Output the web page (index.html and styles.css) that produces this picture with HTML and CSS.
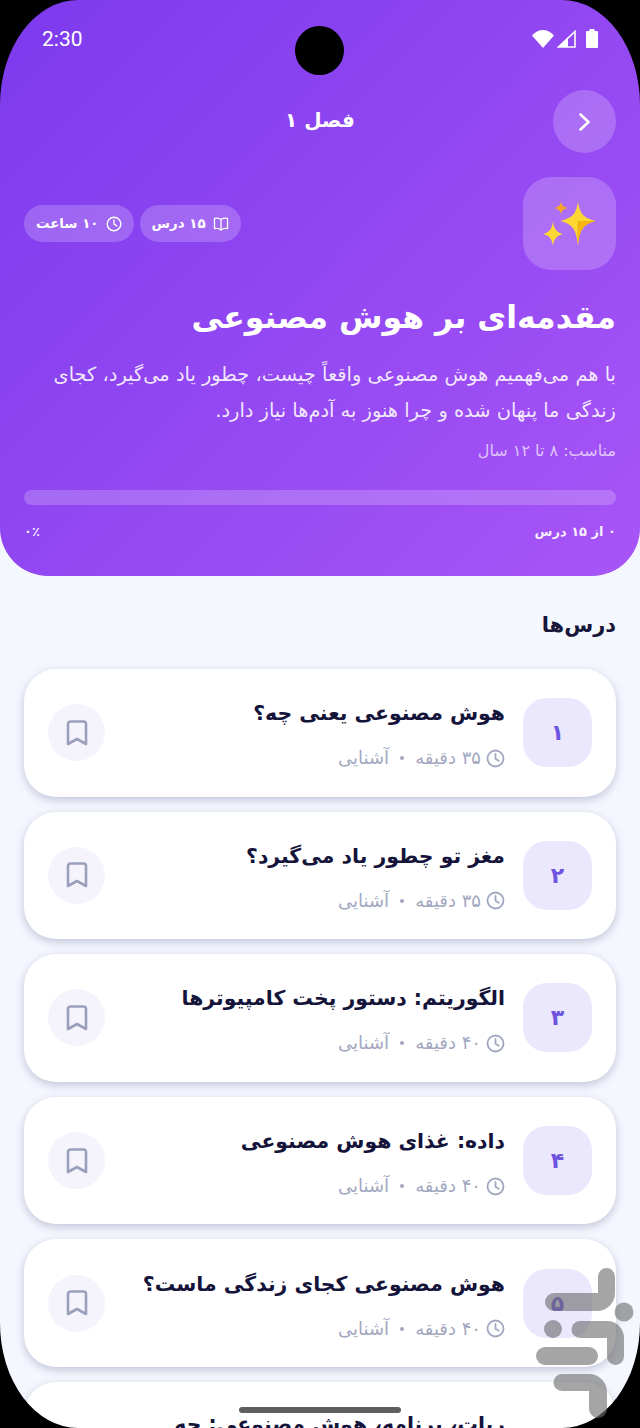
FILE: index.html
```html
<!DOCTYPE html>
<html lang="fa" dir="rtl">
<head>
<meta charset="utf-8">
<title>فصل ۱</title>
<link rel="stylesheet" href="styles.css">
</head>
<body>
<div class="screen">
  <header class="hero">
    <div class="status" dir="ltr">
      <span class="time">2:30</span>
      <div class="status-icons">
        <svg width="22" height="18" viewBox="0 0 22 18"><path d="M0 5.500C3 2 7 0 11 0s8 2 11 5.500L11 18z" fill="#fff"/></svg>
        <svg width="19" height="18" viewBox="0 0 19 18"><path d="M18 1.500V17H1.500z" fill="none" stroke="#fff" stroke-width="1.600"/><path d="M11 8.500V17H1.500z" fill="#fff"/></svg>
        <svg class="batt" width="12" height="19" viewBox="0 0 12 19"><path d="M3.500 0h5v2H11a1 1 0 0 1 1 1v15a1 1 0 0 1-1 1H1a1 1 0 0 1-1-1V3a1 1 0 0 1 1-1h2.500z" fill="#fff"/></svg>
      </div>
    </div>
    <div class="topbar">
      <button class="back" aria-label="بازگشت">
        <svg width="16" height="22" viewBox="0 0 16 22"><path d="M3.500 3.500L11.500 11l-8 7.500" fill="none" stroke="#fff" stroke-width="2.600" stroke-linecap="round" stroke-linejoin="round"/></svg>
      </button>
      <h2 class="chapter">فصل ۱</h2>
    </div>
    <div class="intro">
      <div class="tile">
        <svg width="60" height="50" viewBox="0 0 60 50">
          <path d="M38 2c1.500 12 5 17 18 20-13 3-16.500 9-18 25-1.500-16-5-22-18-25 13-3 16.500-8 18-20z" fill="#fdd835"/>
          <path d="M38 47c-.5-12-1-20 0-25l18 0c-13 3-16.500 9-18 25z" fill="#f6b40e"/>
          <path d="M13 22c1 8 3 11 10 13-7 2-9 5-10 12-1-7-3-10-10-12 7-2 9-5 10-13z" fill="#fdd835"/>
          <path d="M21 2c.5 4 2 6 7 7-5 1-6.500 3-7 7-.5-4-2-6-7-7 5-1 6.500-3 7-7z" fill="#f5a623"/>
        </svg>
      </div>
      <div class="chips">
        <span class="chip">
          <svg width="16" height="16" viewBox="0 0 16 16"><path d="M8 3.500C6.500 2.500 4 2 1.500 2.300v10.200C4 12.200 6.500 12.700 8 14c1.500-1.300 4-1.800 6.500-1.500V2.300C12 2 9.500 2.500 8 3.500zM8 3.500V14" fill="none" stroke="#fff" stroke-width="1.300" stroke-linejoin="round"/></svg>
          ۱۵ درس
        </span>
        <span class="chip">
          <svg width="16" height="16" viewBox="0 0 16 16"><circle cx="8" cy="8" r="6.800" fill="none" stroke="#fff" stroke-width="1.400"/><path d="M8 4v4.200l2.700 1.600" fill="none" stroke="#fff" stroke-width="1.400" stroke-linecap="round"/></svg>
          ۱۰ ساعت
        </span>
      </div>
    </div>
    <h1 class="headline">مقدمه‌ای بر هوش مصنوعی</h1>
    <p class="lead">با هم می‌فهمیم هوش مصنوعی واقعاً چیست، چطور یاد می‌گیرد، کجای زندگی ما پنهان شده و چرا هنوز به آدم‌ها نیاز دارد.</p>
    <p class="age">مناسب: ۸ تا ۱۲ سال</p>
    <div class="track"></div>
    <div class="progress-row">
      <span>۰ از ۱۵ درس</span>
      <span>۰٪</span>
    </div>
  </header>

  <main class="content">
    <h3 class="section">درس‌ها</h3>
    <div class="list">
      <article class="card">
        <div class="num">۱</div>
        <div class="body">
          <h4 class="lesson">هوش مصنوعی یعنی چه؟</h4>
          <div class="meta">
            <svg class="clock" width="19" height="19" viewBox="0 0 19 19"><circle cx="9.500" cy="9.500" r="8" fill="none" stroke="#a2a7c0" stroke-width="1.800"/><path d="M9.500 5v4.800l3.200 1.900" fill="none" stroke="#a2a7c0" stroke-width="1.800" stroke-linecap="round"/></svg>
            <span>۳۵ دقیقه</span><i class="dot"></i><span>آشنایی</span>
          </div>
        </div>
        <div class="mark"><svg width="22" height="26" viewBox="0 0 22 26"><path d="M2 4a2.500 2.500 0 0 1 2.500-2.500h13A2.500 2.500 0 0 1 20 4v20l-9-5-9 5z" fill="none" stroke="#9a9fbc" stroke-width="2.600" stroke-linejoin="round"/></svg></div>
      </article>
      <article class="card">
        <div class="num">۲</div>
        <div class="body">
          <h4 class="lesson">مغز تو چطور یاد می‌گیرد؟</h4>
          <div class="meta">
            <svg class="clock" width="19" height="19" viewBox="0 0 19 19"><circle cx="9.500" cy="9.500" r="8" fill="none" stroke="#a2a7c0" stroke-width="1.800"/><path d="M9.500 5v4.800l3.200 1.900" fill="none" stroke="#a2a7c0" stroke-width="1.800" stroke-linecap="round"/></svg>
            <span>۳۵ دقیقه</span><i class="dot"></i><span>آشنایی</span>
          </div>
        </div>
        <div class="mark"><svg width="22" height="26" viewBox="0 0 22 26"><path d="M2 4a2.500 2.500 0 0 1 2.500-2.500h13A2.500 2.500 0 0 1 20 4v20l-9-5-9 5z" fill="none" stroke="#9a9fbc" stroke-width="2.600" stroke-linejoin="round"/></svg></div>
      </article>
      <article class="card">
        <div class="num">۳</div>
        <div class="body">
          <h4 class="lesson">الگوریتم: دستور پخت کامپیوترها</h4>
          <div class="meta">
            <svg class="clock" width="19" height="19" viewBox="0 0 19 19"><circle cx="9.500" cy="9.500" r="8" fill="none" stroke="#a2a7c0" stroke-width="1.800"/><path d="M9.500 5v4.800l3.200 1.900" fill="none" stroke="#a2a7c0" stroke-width="1.800" stroke-linecap="round"/></svg>
            <span>۴۰ دقیقه</span><i class="dot"></i><span>آشنایی</span>
          </div>
        </div>
        <div class="mark"><svg width="22" height="26" viewBox="0 0 22 26"><path d="M2 4a2.500 2.500 0 0 1 2.500-2.500h13A2.500 2.500 0 0 1 20 4v20l-9-5-9 5z" fill="none" stroke="#9a9fbc" stroke-width="2.600" stroke-linejoin="round"/></svg></div>
      </article>
      <article class="card">
        <div class="num">۴</div>
        <div class="body">
          <h4 class="lesson">داده: غذای هوش مصنوعی</h4>
          <div class="meta">
            <svg class="clock" width="19" height="19" viewBox="0 0 19 19"><circle cx="9.500" cy="9.500" r="8" fill="none" stroke="#a2a7c0" stroke-width="1.800"/><path d="M9.500 5v4.800l3.200 1.900" fill="none" stroke="#a2a7c0" stroke-width="1.800" stroke-linecap="round"/></svg>
            <span>۴۰ دقیقه</span><i class="dot"></i><span>آشنایی</span>
          </div>
        </div>
        <div class="mark"><svg width="22" height="26" viewBox="0 0 22 26"><path d="M2 4a2.500 2.500 0 0 1 2.500-2.500h13A2.500 2.500 0 0 1 20 4v20l-9-5-9 5z" fill="none" stroke="#9a9fbc" stroke-width="2.600" stroke-linejoin="round"/></svg></div>
      </article>
      <article class="card">
        <div class="num">۵</div>
        <div class="body">
          <h4 class="lesson">هوش مصنوعی کجای زندگی ماست؟</h4>
          <div class="meta">
            <svg class="clock" width="19" height="19" viewBox="0 0 19 19"><circle cx="9.500" cy="9.500" r="8" fill="none" stroke="#a2a7c0" stroke-width="1.800"/><path d="M9.500 5v4.800l3.200 1.900" fill="none" stroke="#a2a7c0" stroke-width="1.800" stroke-linecap="round"/></svg>
            <span>۴۰ دقیقه</span><i class="dot"></i><span>آشنایی</span>
          </div>
        </div>
        <div class="mark"><svg width="22" height="26" viewBox="0 0 22 26"><path d="M2 4a2.500 2.500 0 0 1 2.500-2.500h13A2.500 2.500 0 0 1 20 4v20l-9-5-9 5z" fill="none" stroke="#9a9fbc" stroke-width="2.600" stroke-linejoin="round"/></svg></div>
      </article>
      <article class="card card-last">
        <div class="body">
          <h4 class="lesson">ربات، برنامه، هوش مصنوعی: چه</h4>
        </div>
      </article>
    </div>
  </main>

  <div class="camera"></div>
  <div class="frame"></div>
  <div class="homebar"></div>
  <svg class="watermark" width="104" height="160" viewBox="532 1265 104 160">
    <g fill="#6e6e6e" fill-opacity=".62">
      <path d="M598 1276.500a8.500 8.500 0 0 1 17 0V1293a18 18 0 0 1-18 18h-43a9 9 0 0 1 0-18h44z"/>
      <circle cx="624" cy="1312" r="9.500"/>
      <circle cx="553" cy="1329" r="9"/>
      <path d="M580 1321h27a17 17 0 0 1 17 17v18.500a8.500 8.500 0 0 1-17 0V1338h-27a8.500 8.500 0 0 1 0-17z"/>
      <rect x="536" y="1347" width="62" height="18" rx="9"/>
      <path d="M562 1374h27a18 18 0 0 1 18 18v17a9 9 0 0 1-18 0v-18h-27a8.500 8.500 0 0 1 0-17z"/>
    </g>
  </svg>
</div>
</body>
</html>
```
FILE: styles.css
```css
* { box-sizing: border-box; }
html, body { margin: 0; padding: 0; background: #000; }
body { font-family: "DejaVu Sans", "Noto Sans", sans-serif; }
h1, h2, h3, h4, p { margin: 0; }

.screen {
  position: relative;
  width: 640px;
  height: 1428px;
  overflow: hidden;
  background: #f4f7fe;
}

.hero {
  height: 576px;
  padding: 0 24px;
  color: #fff;
  background: linear-gradient(135deg, #7c3aed, #a855f7);
  border-radius: 0 0 48px 48px;
}

.status {
  height: 78px;
  padding: 26px 18px 0;
  display: flex;
  justify-content: space-between;
  align-items: flex-start;
}
.time { font: 400 21px/26px Roboto, sans-serif; }
.status-icons { display: flex; gap: 3px; padding-top: 4px; }
.batt { margin-left: 7px; margin-top: -1px; }

.topbar {
  position: relative;
  height: 99px;
  padding-top: 12px;
  display: flex;
  align-items: flex-start;
}
.back {
  width: 63px;
  height: 63px;
  padding: 0;
  border: 0;
  border-radius: 50%;
  background: rgba(255, 255, 255, .2);
  display: flex;
  align-items: center;
  justify-content: center;
}
.chapter {
  flex: 1;
  margin-left: 63px;
  padding-top: 12px;
  text-align: center;
  font-size: 20px;
  line-height: 36px;
  font-weight: 700;
}

.intro { display: flex; justify-content: space-between; align-items: flex-start; }
.tile {
  width: 93px;
  height: 93px;
  border-radius: 28px;
  background: rgba(255, 255, 255, .2);
  display: flex;
  align-items: center;
  justify-content: center;
}
.chips { display: flex; gap: 6px; padding-top: 28px; }
.chip {
  height: 37px;
  padding: 0 12px;
  border-radius: 19px;
  background: rgba(255, 255, 255, .2);
  display: flex;
  align-items: center;
  gap: 7px;
  font-size: 13.400px;
  font-weight: 700;
}

.headline {
  margin-top: 24px;
  font-size: 31.500px;
  line-height: 46px;
  font-weight: 700;
  white-space: nowrap;
}
.lead {
  margin-top: 17px;
  font-size: 19.400px;
  line-height: 36px;
  color: rgba(255, 255, 255, .88);
}
.age {
  margin-top: 9px;
  font-size: 16px;
  line-height: 26px;
  color: rgba(255, 255, 255, .68);
}
.track {
  margin-top: 26px;
  height: 15px;
  border-radius: 8px;
  background: rgba(255, 255, 255, .2);
}
.progress-row {
  margin-top: 16px;
  display: flex;
  justify-content: space-between;
  font-size: 13px;
  line-height: 22px;
  font-weight: 700;
  color: rgba(255, 255, 255, .92);
}

.content { padding: 30px 24px 0; }
.section {
  font-size: 21px;
  line-height: 38px;
  font-weight: 700;
  color: #17173a;
}
.list { margin-top: 25px; display: flex; flex-direction: column; gap: 15px; }
.card {
  flex: none;
  height: 127.600px;
  padding: 0 24px;
  border-radius: 32px;
  background: #fff;
  box-shadow: 0 3px 8px rgba(70, 70, 120, .28);
  display: flex;
  align-items: center;
  gap: 18px;
}
.card-last { height: 154px; padding: 24px 111px 0 24px; align-items: flex-start; }
.num {
  flex: none;
  width: 69px;
  height: 69px;
  border-radius: 24px;
  background: #ebe7fd;
  color: #6d55e0;
  font-size: 22px;
  font-weight: 700;
  display: flex;
  align-items: center;
  justify-content: center;
}
.body { flex: 1; min-width: 0; }
.lesson {
  font-size: 20.400px;
  line-height: 36px;
  font-weight: 700;
  color: #14143a;
  white-space: nowrap;
}
.meta {
  margin-top: 15px;
  display: flex;
  align-items: center;
  gap: 5px;
  font-size: 18px;
  line-height: 24px;
  color: #a2a7c0;
}
.dot {
  width: 4px;
  height: 4px;
  margin: 0 6px;
  border-radius: 50%;
  background: #a2a7c0;
}
.mark {
  flex: none;
  width: 57px;
  height: 57px;
  border-radius: 50%;
  background: #f5f4fd;
  display: flex;
  align-items: center;
  justify-content: center;
}

.camera {
  position: absolute;
  left: 295px;
  top: 26px;
  width: 49px;
  height: 49px;
  border-radius: 50%;
  background: #000;
}
.frame {
  position: absolute;
  inset: 0;
  border-radius: 78px / 105px;
  box-shadow: 0 0 0 120px #000;
  pointer-events: none;
}
.homebar {
  position: absolute;
  left: 239px;
  top: 1407px;
  width: 162px;
  height: 6px;
  border-radius: 3px;
  background: #5f5f5f;
}
.watermark { position: absolute; left: 532px; top: 1265px; }
```
